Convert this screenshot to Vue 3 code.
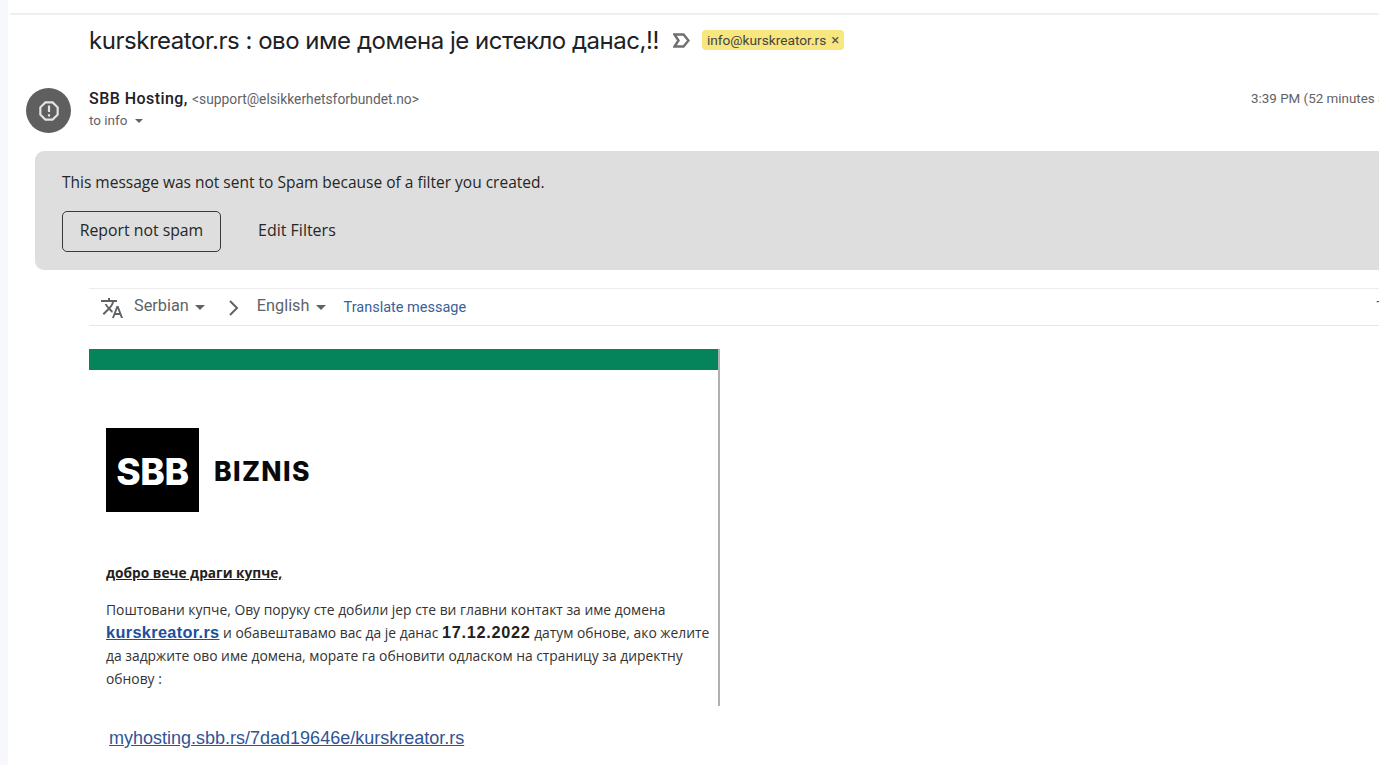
<template>
  <div class="page">
    <div class="strip"></div>
    <main class="main">
      <div class="rule"></div>

      <header class="subject">
        <h1 class="title">kurskreator.rs : ово име домена је истекло данас,!!</h1>
        <svg class="marker" width="17" height="15" viewBox="0 0 17 15">
          <path d="M1.5 1.5h9l5 6-5 6h-9l4-6z" fill="none" stroke="#6f6f6f" stroke-width="2.4" />
        </svg>
        <span class="chip">info@kurskreator.rs<span class="chip-x">×</span></span>
      </header>

      <section class="sender">
        <div class="avatar">
          <svg width="26" height="26" viewBox="0 0 24 24" fill="#e4e4e4">
            <path d="M15.73 3H8.27L3 8.27v7.46L8.27 21h7.46L21 15.73V8.27L15.73 3zM19 14.9L14.9 19H9.1L5 14.9V9.1L9.1 5h5.8L19 9.1v5.8zM11 7h2v6h-2zM11 15h2v2h-2z" />
          </svg>
        </div>
        <div class="who">
          <div class="from"><b>SBB Hosting,</b> <span class="addr">&lt;support@elsikkerhetsforbundet.no&gt;</span></div>
          <div class="to">to info <i class="caret"></i></div>
        </div>
        <div class="time">3:39 PM (52 minutes ago)</div>
      </section>

      <section class="banner">
        <p class="banner-text">This message was not sent to Spam because of a filter you created.</p>
        <div class="banner-actions">
          <button class="btn">Report not spam</button>
          <span class="edit">Edit Filters</span>
        </div>
      </section>

      <div class="translate">
        <svg class="tr-icon" width="24" height="24" viewBox="0 0 24 24" fill="#5f6368">
          <path d="M12.87 15.07l-2.54-2.51.03-.03c1.74-1.94 2.98-4.17 3.71-6.53H17V4h-7V2H8v2H1v1.99h11.17C11.5 7.92 10.44 9.75 9 11.35 8.07 10.32 7.3 9.19 6.69 8h-2c.73 1.63 1.73 3.17 2.98 4.56l-5.09 5.02L4 19l5-5 3.11 3.11.76-2.04zM18.5 10h-2L12 22h2l1.12-3h4.75L21 22h2l-4.5-12zm-2.62 7l1.62-4.33L19.12 17h-3.24z" />
        </svg>
        <span class="lang serbian">Serbian <i class="caret dark"></i></span>
        <svg class="chev" width="12" height="18" viewBox="0 0 12 18">
          <path d="M2 2l7 7-7 7" fill="none" stroke="#5f6368" stroke-width="2" />
        </svg>
        <span class="lang">English <i class="caret dark"></i></span>
        <span class="tr-link">Translate message</span>
        <span class="tr-off">Turn off for: Serbian</span>
      </div>

      <article class="email">
        <div class="green"></div>
        <div class="logo">
          <div class="logo-box">SBB</div>
          <div class="logo-word">BIZNIS</div>
        </div>
        <p class="greet">добро вече драги купче,</p>
        <p class="para">
          Поштовани купче, Ову поруку сте добили јер сте ви главни контакт за име домена
          <a class="dom">kurskreator.rs</a> и обавештавамо вас да је данас <b class="date">17.12.2022</b>
          датум обнове, ако желите да задржите ово име домена, морате га обновити одласком на страницу за директну обнову :
        </p>
      </article>
      <a class="renew">myhosting.sbb.rs/7dad19646e/kurskreator.rs</a>
    </main>
  </div>
</template>

<script setup>
</script>

<style>
html, body { margin: 0; background: #fff; overflow: hidden; }
</style>

<style scoped>
.page {
  display: flex;
  width: 1379px;
  height: 765px;
  overflow: hidden;
  background: #f6f8fc;
  color: #222;
}
.strip { flex: 0 0 8px; }
.main {
  flex: 0 0 1371px;
  width: 1371px;
  background: #fff;
  overflow: hidden;
  font-family: "Open Sans", sans-serif;
}
.rule { height: 2px; margin: 13px 0 0 2px; background: #efefef; }

.subject { display: flex; align-items: center; height: 50px; padding-left: 81px; }
.title {
  margin: 2px 0 0;
  font: 400 24px/48px Inter, sans-serif;
  letter-spacing: -0.47px;
  color: #202124;
  white-space: nowrap;
}
.marker { margin-left: 14px; flex: none; }
.chip {
  margin-left: 12px;
  height: 20px;
  padding: 0 5px;
  display: inline-flex;
  align-items: center;
  background: #f8e67f;
  border-radius: 4px;
  font: 400 13.7px/20px Roboto, sans-serif;
  color: #444;
  white-space: nowrap;
}
.chip-x { margin-left: 5px; font-size: 15px; color: #555; }

.sender { display: flex; margin-top: 23px; height: 45px; padding-left: 18px; }
.avatar {
  flex: none;
  width: 45px;
  height: 45px;
  border-radius: 50%;
  background: #5f5f5f;
  display: flex;
  align-items: center;
  justify-content: center;
}
.who { flex: 0 0 1180px; padding-left: 18px; box-sizing: border-box; }
.from { line-height: 20px; white-space: nowrap; }
.from b { font: 500 16px/20px Roboto, sans-serif; color: #202124; letter-spacing: 0.45px; }
.addr { font: 400 13.8px/20px Roboto, sans-serif; color: #5f6368; }
.to { font: 400 13.5px/20px Roboto, sans-serif; color: #5f6368; margin-top: 1px; }
.caret {
  display: inline-block;
  width: 0;
  height: 0;
  margin-left: 4px;
  vertical-align: 2px;
  border: 4.5px solid transparent;
  border-top-color: #5f6368;
  border-bottom: 0;
}
.time {
  flex: none;
  font: 400 13.4px/20px Roboto, sans-serif;
  padding-top: 1px;
  color: #5f6368;
  white-space: nowrap;
}

.banner {
  margin: 18px 0 0 27px;
  height: 119px;
  box-sizing: border-box;
  padding: 21px 27px 0;
  background: #dedede;
  border-radius: 9px 0 0 9px;
  font-family: "Open Sans", sans-serif;
}
.banner-text { margin: 0; font-size: 15.5px; line-height: 20px; color: #262626; }
.banner-actions { display: flex; align-items: center; margin-top: 19px; }
.btn {
  width: 159px;
  height: 41px;
  padding: 0 0 4px;
  background: transparent;
  border: 1px solid #3a3a3a;
  border-radius: 5px;
  font: 400 15.8px "Open Sans", sans-serif;
  color: #262626;
}
.edit { margin-left: 37px; padding-bottom: 4px; font-size: 16px; color: #262626; }

.translate {
  display: flex;
  align-items: center;
  margin: 18px 0 0 81px;
  height: 38px;
  box-sizing: border-box;
  border-top: 1px solid #ececec;
  border-bottom: 1px solid #e6e6e6;
  padding-left: 11px;
  white-space: nowrap;
}
.tr-icon { flex: none; margin-top: 2px; }
.lang { font: 400 16.3px/20px Roboto, sans-serif; color: #5f6368; margin-top: -2px; }
.lang .caret { vertical-align: 1px; margin-left: 2px; border-width: 5px; border-bottom: 0; }
.serbian { margin-left: 10px; }
.chev { margin: 2px 17px 0 23px; flex: none; }
.tr-link { margin-left: 18px; margin-top: 1px; font: 400 14.5px/20px Roboto, sans-serif; color: #3b5f99; }
.tr-off { margin-left: 910px; font: 400 14px/20px Roboto, sans-serif; color: #3b5f99; }

.email {
  margin: 23px 0 0 81px;
  width: 629px;
  height: 357px;
  border-right: 2px solid #b0b0b0;
  font-family: "Open Sans", sans-serif;
}
.green { height: 21px; background: #05835a; }
.logo { display: flex; align-items: center; margin: 58px 0 0 17px; height: 84px; }
.logo-box {
  width: 93px;
  height: 84px;
  background: #000;
  color: #fff;
  font: 800 37px/87px Inter, sans-serif;
  text-align: center;
  letter-spacing: -0.4px;
}
.logo-word {
  margin: 3px 0 0 15px;
  font: 800 26.5px/1 Inter, sans-serif;
  letter-spacing: 1.4px;
  color: #0a0a0a;
}
.greet {
  margin: 51px 0 0 17px;
  font-size: 13.7px;
  line-height: 20px;
  font-weight: 700;
  text-decoration: underline;
  color: #222;
}
.para {
  margin: 15px 0 0 17px;
  width: 610px;
  font-size: 13.85px;
  line-height: 23px;
  color: #333;
}
.dom {
  font: 700 16.3px/1 "Liberation Sans", sans-serif;
  letter-spacing: 0.35px;
  color: #1c4f9c;
  text-decoration: underline;
}
.date { font: 700 16.3px/1 "Liberation Sans", sans-serif; letter-spacing: 0.7px; color: #222; }
.renew {
  display: block;
  margin: 20px 0 0 101px;
  font: 400 18px/24px "Liberation Sans", sans-serif;
  color: #2f5496;
  text-decoration: underline;
}
</style>
